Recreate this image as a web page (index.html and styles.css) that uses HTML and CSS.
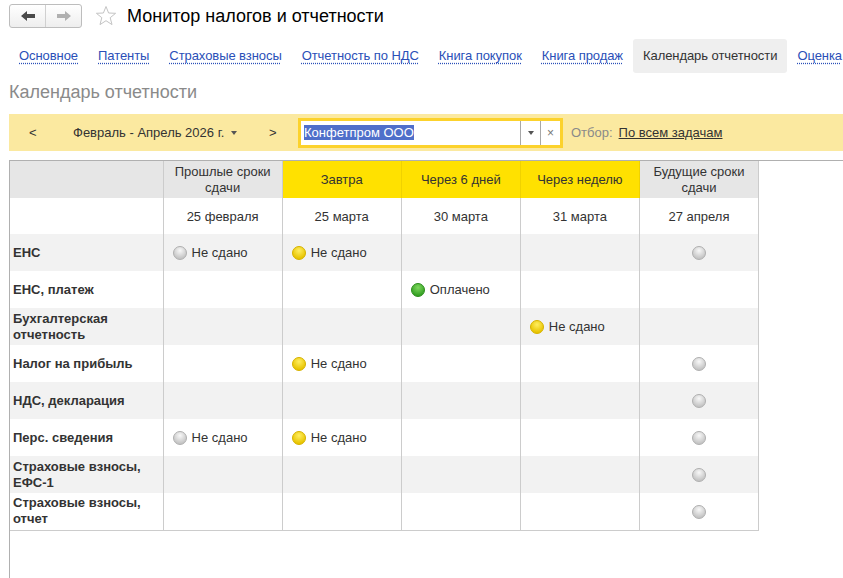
FILE: index.html
```html
<!DOCTYPE html>
<html lang="ru">
<head>
    <meta charset="UTF-8">
    <title>Монитор налогов и отчетности</title>
    <link rel="stylesheet" href="styles.css">
</head>
<body>
    <header class="topbar">
        <div class="nav-group">
            <button class="nav-btn" type="button">
                <svg width="16" height="12" viewBox="0 0 16 12"><path d="M1 6 L7 1 L7 4 L15 4 L15 8 L7 8 L7 11 Z" fill="#4a4a4a"/></svg>
            </button>
            <button class="nav-btn" type="button">
                <svg width="16" height="12" viewBox="0 0 16 12"><path d="M15 6 L9 1 L9 4 L1 4 L1 8 L9 8 L9 11 Z" fill="#b0b0b0"/></svg>
            </button>
        </div>
        <svg class="star" width="22" height="22" viewBox="0 0 22 22"><path d="M11 1.5 L13.6 8 L20.6 8.3 L15.2 12.7 L17 19.6 L11 15.7 L5 19.6 L6.8 12.7 L1.4 8.3 L8.4 8 Z" fill="none" stroke="#c4c4c4" stroke-width="1"/></svg>
        <h1 class="title">Монитор налогов и отчетности</h1>
    </header>

    <nav class="tabs">
        <a class="tab" href="#">Основное</a>
        <a class="tab" href="#">Патенты</a>
        <a class="tab" href="#">Страховые взносы</a>
        <a class="tab" href="#">Отчетность по НДС</a>
        <a class="tab" href="#">Книга покупок</a>
        <a class="tab" href="#">Книга продаж</a>
        <span class="tab active">Календарь отчетности</span>
        <a class="tab" href="#">Оценка</a>
    </nav>

    <h2 class="page-title">Календарь отчетности</h2>

    <div class="toolbar">
        <span class="prev">&lt;</span>
        <span class="period">Февраль - Апрель 2026 г. <span class="caret"></span></span>
        <span class="next">&gt;</span>
        <div class="org-field">
            <div class="org-text"><span class="selected">Конфетпром ООО</span></div>
            <span class="org-btn"><span class="caret"></span></span>
            <span class="org-btn clear">×</span>
        </div>
        <span class="filter-label">Отбор:</span>
        <a class="filter-link" href="#">По всем задачам</a>
    </div>

    <div class="grid-frame">
        <table class="calendar">
            <colgroup>
                <col class="c-name">
                <col class="c-day">
                <col class="c-day">
                <col class="c-day">
                <col class="c-day">
                <col class="c-day">
            </colgroup>
            <thead>
                <tr class="head">
                    <th class="gray"></th>
                    <th class="gray">Прошлые сроки<br>сдачи</th>
                    <th class="hot">Завтра</th>
                    <th class="hot">Через 6 дней</th>
                    <th class="hot">Через неделю</th>
                    <th class="gray">Будущие сроки<br>сдачи</th>
                </tr>
                <tr class="dates">
                    <td></td>
                    <td>25 февраля</td>
                    <td>25 марта</td>
                    <td>30 марта</td>
                    <td>31 марта</td>
                    <td>27 апреля</td>
                </tr>
            </thead>
            <tbody>
                <tr>
                    <td class="name">ЕНС</td>
                    <td><span class="status"><i class="dot grey"></i>Не сдано</span></td>
                    <td><span class="status"><i class="dot yellow"></i>Не сдано</span></td>
                    <td></td>
                    <td></td>
                    <td class="future"><i class="dot grey"></i></td>
                </tr>
                <tr>
                    <td class="name">ЕНС, платеж</td>
                    <td></td>
                    <td></td>
                    <td><span class="status"><i class="dot green"></i>Оплачено</span></td>
                    <td></td>
                    <td></td>
                </tr>
                <tr>
                    <td class="name">Бухгалтерская<br>отчетность</td>
                    <td></td>
                    <td></td>
                    <td></td>
                    <td><span class="status"><i class="dot yellow"></i>Не сдано</span></td>
                    <td></td>
                </tr>
                <tr>
                    <td class="name">Налог на прибыль</td>
                    <td></td>
                    <td><span class="status"><i class="dot yellow"></i>Не сдано</span></td>
                    <td></td>
                    <td></td>
                    <td class="future"><i class="dot grey"></i></td>
                </tr>
                <tr>
                    <td class="name">НДС, декларация</td>
                    <td></td>
                    <td></td>
                    <td></td>
                    <td></td>
                    <td class="future"><i class="dot grey"></i></td>
                </tr>
                <tr>
                    <td class="name">Перс. сведения</td>
                    <td><span class="status"><i class="dot grey"></i>Не сдано</span></td>
                    <td><span class="status"><i class="dot yellow"></i>Не сдано</span></td>
                    <td></td>
                    <td></td>
                    <td class="future"><i class="dot grey"></i></td>
                </tr>
                <tr>
                    <td class="name">Страховые взносы,<br>ЕФС-1</td>
                    <td></td>
                    <td></td>
                    <td></td>
                    <td></td>
                    <td class="future"><i class="dot grey"></i></td>
                </tr>
                <tr>
                    <td class="name">Страховые взносы,<br>отчет</td>
                    <td></td>
                    <td></td>
                    <td></td>
                    <td></td>
                    <td class="future"><i class="dot grey"></i></td>
                </tr>
            </tbody>
        </table>
    </div>
</body>
</html>
```

FILE: styles.css
```css
* {
    margin: 0;
    padding: 0;
    box-sizing: border-box;
}

body {
    background: #fff;
    color: #333;
    font-family: "Liberation Sans", Arial, sans-serif;
    font-size: 13px;
    overflow: hidden;
}

.topbar {
    display: flex;
    align-items: center;
    height: 28px;
    padding: 4px 0 0 9px;
}

.nav-group {
    display: flex;
    width: 73px;
    height: 24px;
    border: 1px solid #bdbdbd;
    border-radius: 3px;
    background: linear-gradient(#ffffff, #eeeeee);
    overflow: hidden;
}

.nav-btn {
    flex: 1;
    display: flex;
    align-items: center;
    justify-content: center;
    border: none;
    background: none;
}

.nav-btn + .nav-btn {
    border-left: 1px solid #d0d0d0;
}

.star {
    margin-left: 13px;
}

.title {
    margin-left: 10px;
    font-size: 18px;
    font-weight: normal;
    color: #000;
}

.tabs {
    display: flex;
    margin-top: 11px;
    padding-left: 9px;
    white-space: nowrap;
}

.tab {
    display: block;
    height: 34px;
    line-height: 34px;
    padding: 0 10px 0 10px;
    letter-spacing: -0.07px;
    color: #2a4fb8;
    text-decoration: underline dotted #2a4fb8;
    text-underline-offset: 3px;
}

.tab.active {
    background: #efefef;
    border-radius: 3px;
    color: #333;
    text-decoration: none;
}

.page-title {
    margin: 8px 0 0 9px;
    height: 22px;
    line-height: 22px;
    font-size: 18px;
    font-weight: normal;
    color: #8a8a8a;
}

.toolbar {
    display: flex;
    align-items: center;
    height: 37px;
    margin: 11px 0 0 9px;
    padding-left: 20px;
    background: #fbe9a0;
    white-space: nowrap;
}

.prev {
    width: 44px;
}

.period {
    width: 196px;
}

.next {
    width: 29px;
}

.caret {
    display: inline-block;
    width: 0;
    height: 0;
    margin: 0 0 2px 3px;
    border-left: 3px solid transparent;
    border-right: 3px solid transparent;
    border-top: 4px solid #555;
}

.org-field {
    display: flex;
    width: 265px;
    height: 30px;
    border: 3px solid #fcd22c;
    background: #fff;
}

.org-text {
    flex: 1;
    padding: 3px 0 0 3px;
    font-size: 13px;
    line-height: 17px;
}

.selected {
    background: #4f6fca;
    color: #fff;
}

.org-btn {
    width: 20px;
    display: flex;
    align-items: center;
    justify-content: center;
    border-left: 1px solid #a8a8a8;
}

.org-btn .caret {
    margin: 0;
}

.org-btn.clear {
    color: #777;
    font-size: 12px;
}

.filter-label {
    margin-left: 8px;
    color: #8a8a8a;
}

.filter-link {
    margin-left: 6px;
    color: #333;
    text-decoration: underline;
}

.grid-frame {
    margin: 9px 0 0 9px;
    height: 418px;
    border-top: 1px solid #b0b0b0;
    border-left: 1px solid #b0b0b0;
}

.calendar {
    table-layout: fixed;
    border-collapse: collapse;
    width: 749px;
}

.c-name {
    width: 153px;
}

.c-day {
    width: 119px;
}

.calendar td,
.calendar th {
    border-right: 1px solid #cccccc;
    padding: 0;
    vertical-align: middle;
}

.head th {
    height: 37px;
    font-weight: normal;
    line-height: 16px;
    text-align: center;
}

.head th.gray {
    background: #e6e6e6;
}

.head th.hot {
    background: #ffe100;
    border-right-color: #f0d200;
}

.dates td {
    height: 36px;
    text-align: center;
}

.calendar tbody tr {
    height: 37px;
}

.calendar tbody tr:nth-child(odd) {
    background: #f2f2f2;
}

.calendar tbody tr:last-child td {
    border-bottom: 1px solid #cccccc;
}

.name {
    padding: 0 0 0 3px !important;
    font-weight: bold;
    line-height: 16px;
}

.status {
    display: flex;
    align-items: center;
    gap: 5px;
    padding-left: 9px;
}

.future {
    text-align: center;
}

.dot {
    display: inline-block;
    width: 14px;
    height: 14px;
    border-radius: 50%;
    vertical-align: middle;
}

.dot.grey {
    background: radial-gradient(circle at 50% 30%, #f8f8f8, #c4c4c4 75%);
    border: 1px solid #b0b0b0;
}

.dot.yellow {
    background: radial-gradient(circle at 50% 30%, #ffee60, #e8c400 75%);
    border: 1px solid #d6b200;
}

.dot.green {
    background: radial-gradient(circle at 50% 30%, #7ed85e, #35a023 75%);
    border: 1px solid #2d8d1d;
}
```
